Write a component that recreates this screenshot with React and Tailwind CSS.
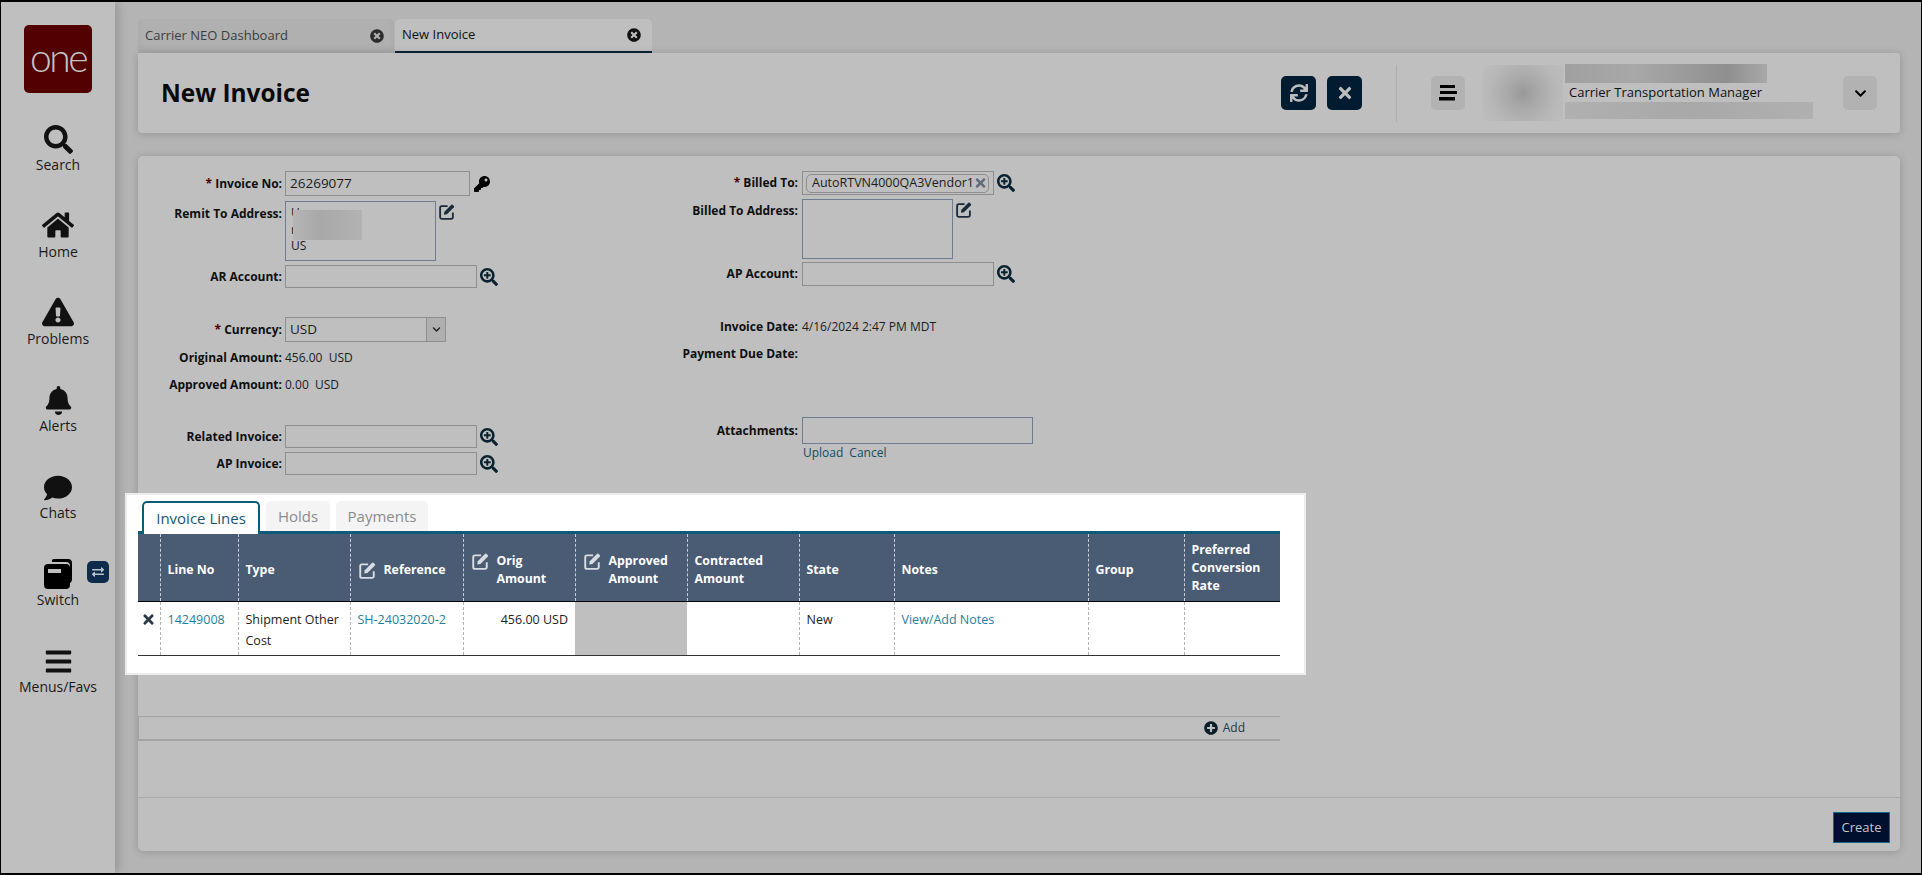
import React from "react";
import {
  FaSearch,
  FaHome,
  FaExclamationTriangle,
  FaBell,
  FaComment,
  FaBars,
  FaKey,
  FaSearchPlus,
  FaSync,
  FaTimes,
  FaChevronDown,
  FaPlusCircle,
  FaTimesCircle,
  FaExchangeAlt,
} from "react-icons/fa";

const SwitchIcon = () => (
  <svg width="28" height="30" viewBox="0 0 28 30">
    <path d="M9 0h15a4 4 0 0 1 4 4v17a4 4 0 0 1-2 3V7a4 4 0 0 0-4-4H8a3 3 0 0 1 1-3z" fill="#000" />
    <path d="M4 5h18a4 4 0 0 1 4 3v18a4 4 0 0 1-4 4H4a4 4 0 0 1-4-4V9a4 4 0 0 1 4-4z" fill="#000" />
    <rect x="4" y="10" width="13" height="4" fill="#bfbfbf" />
  </svg>
);

const AlignIcon = () => (
  <svg width="18" height="16" viewBox="0 0 18 16" fill="#000">
    <rect x="1" y="0" width="15" height="3" />
    <rect x="1" y="6" width="17" height="3" />
    <rect x="0" y="12" width="16" height="3.5" />
  </svg>
);

// outlined square with a solid pencil, the font icons don't have this one
const PencilSquare = ({ size, className }) => (
  <svg width={size} height={size} viewBox="0 0 16 16" className={className}>
    <path
      d="M9 3H3.5A1.5 1.5 0 0 0 2 4.5v9A1.5 1.5 0 0 0 3.5 15h9a1.5 1.5 0 0 0 1.5-1.5V9"
      fill="none"
      stroke="currentColor"
      strokeWidth="1.7"
    />
    <path d="M6 8.2 12.6 1.6a.8.8 0 0 1 1.1 0l1.3 1.3a.8.8 0 0 1 0 1.1L8.4 10.6 5.6 11z" fill="currentColor" />
  </svg>
);

const navItems = [
  { label: "Search", icon: <FaSearch size={29} /> },
  { label: "Home", icon: <FaHome size={32} /> },
  { label: "Problems", icon: <FaExclamationTriangle size={32} /> },
  { label: "Alerts", icon: <FaBell size={29} /> },
  { label: "Chats", icon: <FaComment size={28} /> },
  { label: "Switch", icon: <SwitchIcon /> },
  { label: "Menus/Favs", icon: <FaBars size={29} /> },
];

const Sidebar = () => (
  <aside className="relative z-10 flex w-[114px] shrink-0 flex-col items-center bg-[#bfbfbf] pt-[23px] shadow-[3px_0_10px_rgba(0,0,0,0.18)]">
    <div className="flex h-[68px] w-[68px] items-center justify-center rounded-[5px] bg-[#520000] pb-[4px] font-['Lato',sans-serif] text-[39px] font-light leading-none tracking-[-2.5px] text-[#c4c4c4]">
      one
    </div>
    <div className="mt-[23px] flex flex-col items-center">
      {navItems.map((item) => (
        <div key={item.label} className="relative flex h-[87px] w-[114px] flex-col items-center text-[#111]">
          <div className="flex h-[40px] items-end pb-[2px]">{item.icon}</div>
          <span className="-mt-[1px] text-[14px] leading-[20px] text-[#1a1a1a]">{item.label}</span>
          {item.label === "Switch" && (
            <span className="absolute left-[86px] top-[10px] flex h-[22px] w-[22px] items-center justify-center rounded-[5px] bg-[#0d2b4a] text-[#b9c3cc]">
              <FaExchangeAlt size={12} />
            </span>
          )}
        </div>
      ))}
    </div>
  </aside>
);

const Tabs = () => (
  <div className="flex h-[34px] items-stretch">
    <div className="flex w-[256px] items-center justify-between rounded-t-[5px] bg-[#b0b0b0] pl-[7px] pr-[10px] shadow-[inset_0_-4px_6px_rgba(0,0,0,0.05)]">
      <span className="text-[13px] text-[#3d3d3d]">Carrier NEO Dashboard</span>
      <FaTimesCircle size={14} className="text-[#2c2c2c]" />
    </div>
    <div className="ml-[1px] flex w-[257px] items-center justify-between rounded-t-[5px] border-b-2 border-[#0c2236] bg-[#bfbfbf] pl-[7px] pr-[11px]">
      <span className="text-[13px] text-[#111]">New Invoice</span>
      <FaTimesCircle size={14} className="text-[#111]" />
    </div>
  </div>
);

const NavyButton = ({ children }) => (
  <button className="flex h-[34px] w-[35px] items-center justify-center rounded-[5px] bg-[#011c30] text-[#bcbcbc]">
    {children}
  </button>
);

const GreyButton = ({ children }) => (
  <button className="flex h-[34px] w-[34px] items-center justify-center rounded-[5px] bg-[#b2b2b2] text-black">
    {children}
  </button>
);

const Header = () => (
  <header className="flex h-[80px] items-center rounded-b-[4px] rounded-tr-[4px] bg-[#bfbfbf] pl-[23px] shadow-[0_1px_8px_rgba(0,0,0,0.18)]">
    <h1 className="pt-[1px] text-[24.4px] font-bold leading-none text-[#0a0a0a]">New Invoice</h1>
    <div className="ml-auto flex gap-[11px]">
      <NavyButton>
        <FaSync size={18} />
      </NavyButton>
      <NavyButton>
        <FaTimes size={18} />
      </NavyButton>
    </div>
    <div className="ml-[34px] h-[57px] w-px bg-[#adadad]" />
    <div className="ml-[34px]">
      <GreyButton>
        <AlignIcon />
      </GreyButton>
    </div>
    <div className="ml-[18px] h-[56px] w-[80px] bg-[radial-gradient(circle,#999_0%,#a8a8a8_30%,#b8b8b8_70%,#bdbdbd_100%)]" />
    <div className="ml-[2px] flex h-[60px] w-[250px] flex-col pt-[1px]">
      <div className="h-[19px] w-[202px] bg-[linear-gradient(90deg,#a0a0a0,#a8a8a8_35%,#8f8f8f_80%,#a8a8a8)]" />
      <span className="pl-[4px] text-[13px] leading-[19px] text-[#111]">Carrier Transportation Manager</span>
      <div className="h-[17px] w-[248px] bg-[linear-gradient(90deg,#b0b0b0,#a8a8a8_50%,#b0b0b0)]" />
    </div>
    <div className="ml-[28px] mr-[23px]">
      <GreyButton>
        <FaChevronDown size={13} />
      </GreyButton>
    </div>
  </header>
);

const Label = ({ width, required, children }) => (
  <div className={`${width} shrink-0 text-right text-[12px] font-bold leading-[16px] text-[#0f0f0f]`}>
    {required && <span className="text-[#4d0000]">* </span>}
    {children}
  </div>
);

const LeftRow = ({ label, required, className, children }) => (
  <div className={`flex items-center ${className}`}>
    <Label width="w-[144px]" required={required}>
      {label}
    </Label>
    <div className="ml-[3px] flex h-full items-center">{children}</div>
  </div>
);

const RightRow = ({ label, required, className, children }) => (
  <div className={`flex items-center ${className}`}>
    <Label width="w-[160px]" required={required}>
      {label}
    </Label>
    <div className="ml-[4px] flex h-full items-center">{children}</div>
  </div>
);

const Zoom = () => <FaSearchPlus size={18} className="ml-[3px] shrink-0 text-[#08222f]" />;

const EditIcon = () => <PencilSquare size={17} className="shrink-0 text-[#1b2a3a]" />;

const Value = ({ children }) => <span className="text-[12px] leading-[16px] text-[#1c1c1c]">{children}</span>;

const LeftForm = () => (
  <div className="w-[500px] shrink-0 pt-[15px]">
    <LeftRow label="Invoice No:" required className="h-[25px]">
      <div className="flex h-full w-[185px] items-center border border-[#8e8e8e] pl-[4px] text-[13.5px] text-[#1c1c1c]">26269077</div>
      <FaKey size={16} className="ml-[4px] text-black" />
    </LeftRow>
    <div className="mt-[5px] flex h-[60px]">
      <div className="pt-[5px]">
        <Label width="w-[144px]">Remit To Address:</Label>
      </div>
      <div className="relative ml-[3px] h-full w-[151px] border border-[#6f7b8e] pl-[5px] pt-[3px] text-[12px] leading-[16.5px] text-[#1c1c1c]">
        <div>U</div>
        <div>r</div>
        <div>US</div>
        <div className="absolute left-[7px] top-[8px] h-[30px] w-[69px] bg-[linear-gradient(90deg,#b5b5b5,#a8a8a8_40%,#b2b2b2)]" />
      </div>
      <div className="ml-[2px] pt-[2px]">
        <EditIcon />
      </div>
    </div>
    <LeftRow label="AR Account:" className="mt-[4px] h-[23px]">
      <div className="h-full w-[192px] border border-[#8e8e8e]" />
      <Zoom />
    </LeftRow>
    <LeftRow label="Currency:" required className="mt-[29px] h-[25px]">
      <div className="flex h-full w-[161px] items-center justify-between border border-[#8e8e8e] pl-[4px] text-[13.5px] text-[#1c1c1c]">
        USD
        <span className="flex h-full w-[19px] items-center justify-center border-l border-[#8e8e8e] bg-[#b0b0b0]">
          <FaChevronDown size={9} className="text-[#222]" />
        </span>
      </div>
    </LeftRow>
    <LeftRow label="Original Amount:" className="mt-[8px] h-[16px]">
      <Value>456.00&nbsp; USD</Value>
    </LeftRow>
    <LeftRow label="Approved Amount:" className="mt-[11px] h-[16px]">
      <Value>0.00&nbsp; USD</Value>
    </LeftRow>
    <LeftRow label="Related Invoice:" className="mt-[32px] h-[23px]">
      <div className="h-full w-[192px] border border-[#8e8e8e]" />
      <Zoom />
    </LeftRow>
    <LeftRow label="AP Invoice:" className="mt-[4px] h-[23px]">
      <div className="h-full w-[192px] border border-[#8e8e8e]" />
      <Zoom />
    </LeftRow>
  </div>
);

const RightForm = () => (
  <div className="pt-[15px]">
    <RightRow label="Billed To:" required className="h-[24px]">
      <div className="flex h-full w-[192px] items-center border border-[#8e8e8e] pl-[3px]">
        <div className="flex h-[19px] w-[183px] items-center justify-between rounded-[5px] border border-[#8e8e8e] pl-[5px] pr-[1px] text-[12.5px] text-[#1c1c1c]">
          AutoRTVN4000QA3Vendor1
          <FaTimes size={14} className="text-[#5f6b78]" />
        </div>
      </div>
      <Zoom />
    </RightRow>
    <div className="mt-[4px] flex h-[60px]">
      <div className="pt-[4px]">
        <Label width="w-[160px]">Billed To Address:</Label>
      </div>
      <div className="ml-[4px] h-full w-[151px] border border-[#6f7b8e]" />
      <div className="ml-[2px] pt-[2px]">
        <EditIcon />
      </div>
    </div>
    <RightRow label="AP Account:" className="mt-[3px] h-[24px]">
      <div className="h-full w-[192px] border border-[#8e8e8e]" />
      <Zoom />
    </RightRow>
    <RightRow label="Invoice Date:" className="mt-[33px] h-[16px]">
      <Value>4/16/2024 2:47 PM MDT</Value>
    </RightRow>
    <RightRow label="Payment Due Date:" className="mt-[11px] h-[16px]" />
    <RightRow label="Attachments:" className="mt-[55px] h-[27px]">
      <div className="h-full w-[231px] border border-[#6f7b8e]" />
    </RightRow>
    <div className="ml-[165px] mt-[1px] flex gap-[6px] text-[12px] leading-[16px] text-[#134d61]">
      <span>Upload</span>
      <span>Cancel</span>
    </div>
  </div>
);

const columns = ["w-[22px]", "w-[78px]", "w-[112px]", "w-[113px]", "w-[112px]", "w-[112px]", "w-[112px]", "w-[95px]", "w-[194px]", "w-[96px]", "w-[96px]"];

const HeaderCell = ({ edit, className = "pt-[5px]", children }) => (
  <th className={`border-l border-dashed border-[#c9ced6] pl-[7px] pr-[4px] text-left align-middle text-[12.3px] font-bold leading-[18px] text-white ${className}`}>
    {edit ? (
      <div className="flex items-start">
        <PencilSquare size={18} className="mr-[8px] shrink-0 text-[#d9dde3]" />
        <span>{children}</span>
      </div>
    ) : (
      children
    )}
  </th>
);

const Cell = ({ className = "", children }) => (
  <td className={`border-l border-dashed border-[#b5b5b5] pl-[7px] pr-[7px] pt-[7px] align-top text-[12.5px] leading-[21px] ${className}`}>{children}</td>
);

const InvoiceTable = () => (
  <table className="w-[1142px] table-fixed border-collapse">
    <colgroup>
      {columns.map((w, i) => (
        <col key={i} className={w} />
      ))}
    </colgroup>
    <thead>
      <tr className="h-[67px] border-b border-black bg-[#4a5b74]">
        <th />
        <HeaderCell>Line No</HeaderCell>
        <HeaderCell>Type</HeaderCell>
        <HeaderCell edit>Reference</HeaderCell>
        <HeaderCell edit>
          Orig
          <br />
          Amount
        </HeaderCell>
        <HeaderCell edit>
          Approved
          <br />
          Amount
        </HeaderCell>
        <HeaderCell>
          Contracted
          <br />
          Amount
        </HeaderCell>
        <HeaderCell>State</HeaderCell>
        <HeaderCell>Notes</HeaderCell>
        <HeaderCell>Group</HeaderCell>
        <HeaderCell className="pt-[1px]">
          Preferred
          <br />
          Conversion
          <br />
          Rate
        </HeaderCell>
      </tr>
    </thead>
    <tbody>
      <tr className="h-[54px] border-b border-[#333]">
        <td className="pl-[3px] pt-[7px] align-top">
          <FaTimes size={15} className="mt-[3px] text-[#2c3a48]" />
        </td>
        <Cell className="text-[#1f7f9c]">14249008</Cell>
        <Cell className="text-[#222]">Shipment Other Cost</Cell>
        <Cell className="text-[#1f7f9c]">SH-24032020-2</Cell>
        <Cell className="text-right text-[#222]">456.00 USD</Cell>
        <td className="bg-[#bfbfbf]" />
        <td />
        <Cell className="text-[#222]">New</Cell>
        <Cell className="text-[#1f7f9c]">View/Add Notes</Cell>
        <Cell />
        <Cell />
      </tr>
    </tbody>
  </table>
);

const Spotlight = () => (
  <section className="relative z-20 -ml-[13px] h-[182px] w-[1181px] border-2 border-[#ececec] bg-white pl-[11px] pt-[6px]">
    <div className="flex h-[33px] w-[1142px] items-end gap-[6px] border-b-[3px] border-[#0e5d78] pl-[4px]">
      <div className="-mb-[3px] flex h-[33px] w-[118px] items-center justify-center rounded-t-[5px] border-2 border-b-0 border-[#0e5d78] bg-white text-[15px] font-medium text-[#17566c]">
        Invoice Lines
      </div>
      <div className="flex h-[30px] w-[64px] items-center justify-center rounded-t-[5px] bg-[#f4f4f4] pt-[1px] text-[15px] text-[#8b8b8b]">Holds</div>
      <div className="flex h-[30px] w-[92px] items-center justify-center rounded-t-[5px] bg-[#f4f4f4] pt-[1px] text-[15px] text-[#8b8b8b]">Payments</div>
    </div>
    <InvoiceTable />
  </section>
);

export default function App() {
  return (
    <div className="flex h-[875px] w-[1922px] overflow-hidden border-x border-y-2 border-black bg-[#b4b4b4] font-['Open_Sans',sans-serif]">
      <Sidebar />
      <main className="flex min-w-0 flex-1 flex-col pl-[23px] pr-[21px] pt-[17px]">
        <Tabs />
        <Header />
        <div className="mt-[23px] flex h-[695px] flex-col rounded-[5px] bg-[#bfbfbf] shadow-[0_1px_8px_rgba(0,0,0,0.18)]">
          <div className="flex pb-[18px]">
            <LeftForm />
            <RightForm />
          </div>
          <Spotlight />
          <div className="mt-[41px] flex h-[25px] w-[1142px] items-center justify-end border-b-2 border-l border-t border-[#a3a3a3] pr-[35px] text-[12px] text-[#1c3a4a]">
            <FaPlusCircle size={14} className="mr-[5px] text-[#0b1e2b]" />
            Add
          </div>
          <div className="mt-[56px] flex flex-1 items-start justify-end border-t border-[#a9a9a9] pr-[10px] pt-[14px]">
            <button className="h-[31px] w-[57px] border border-[#0f6a87] bg-[#010f2e] text-[13px] text-[#c4c4c4]">Create</button>
          </div>
        </div>
      </main>
    </div>
  );
}
